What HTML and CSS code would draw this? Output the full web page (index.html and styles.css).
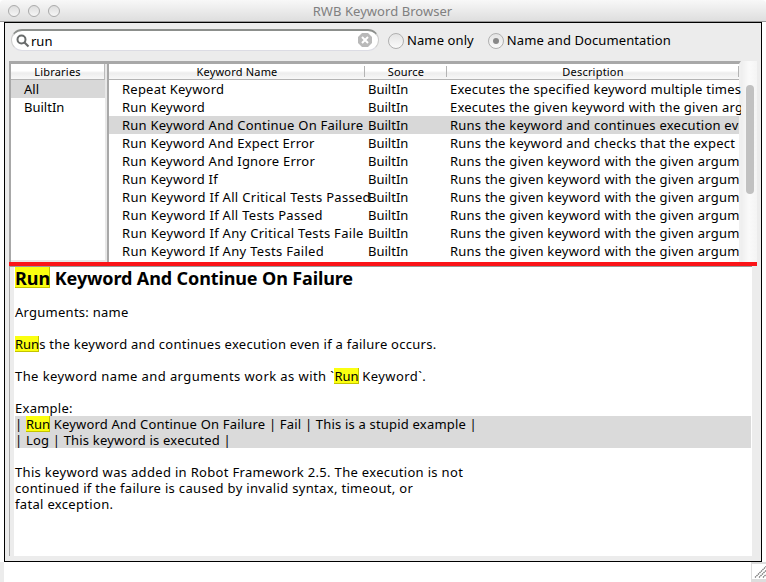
FILE: index.html
```html
<!DOCTYPE html>
<html lang="en">
<head>
<meta charset="utf-8">
<title>RWB Keyword Browser</title>
<link rel="stylesheet" href="styles.css">
</head>
<body>
<header class="titlebar">
  <div class="lights"><i></i><i></i><i></i></div>
  <h1><span>RWB Keyword Browser</span></h1>
</header>
<main class="frame">
  <div class="toolbar">
    <div class="search">
      <svg class="lens" width="14" height="14" viewBox="0 0 14 14"><circle cx="5.5" cy="5.5" r="4" fill="none" stroke="#686b6b" stroke-width="2"/><path d="M8.500 8.500l4 4" stroke="#686b6b" stroke-width="2.200"/></svg>
      <span class="query">run</span>
      <svg class="clear" width="14" height="14" viewBox="0 0 14 14"><path d="M4 0h6l4 4v6l-4 4H4l-4-4V4z" fill="#b9b9b9"/><path d="M4 4l6 6M10 4l-6 6" stroke="#fff" stroke-width="2"/></svg>
    </div>
    <div class="option"><i class="radio"></i><span>Name only</span></div>
    <div class="option second"><i class="radio on"></i><span>Name and Documentation</span></div>
  </div>
  <div class="lists">
    <section class="libraries">
      <div class="head"><span>Libraries</span></div>
      <div class="row selected">All</div>
      <div class="row">BuiltIn</div>
    </section>
    <section class="keywords">
      <div class="head cols"><span>Keyword Name</span><span>Source</span><span>Description</span></div>
      <div class="row cols"><span>Repeat Keyword</span><span>BuiltIn</span><span>Executes the specified keyword multiple times</span></div>
      <div class="row cols"><span>Run Keyword</span><span>BuiltIn</span><span>Executes the given keyword with the given arg</span></div>
      <div class="row cols selected"><span>Run Keyword And Continue On Failure</span><span>BuiltIn</span><span>Runs the keyword and continues execution ev</span></div>
      <div class="row cols"><span>Run Keyword And Expect Error</span><span>BuiltIn</span><span>Runs the keyword and checks that the expect</span></div>
      <div class="row cols"><span>Run Keyword And Ignore Error</span><span>BuiltIn</span><span>Runs the given keyword with the given argum</span></div>
      <div class="row cols"><span>Run Keyword If</span><span>BuiltIn</span><span>Runs the given keyword with the given argum</span></div>
      <div class="row cols wide"><span>Run Keyword If All Critical Tests Passed</span><span>BuiltIn</span><span>Runs the given keyword with the given argum</span></div>
      <div class="row cols wide"><span>Run Keyword If All Tests Passed</span><span>BuiltIn</span><span>Runs the given keyword with the given argum</span></div>
      <div class="row cols wide"><span>Run Keyword If Any Critical Tests Faile</span><span>BuiltIn</span><span>Runs the given keyword with the given argum</span></div>
      <div class="row cols wide"><span>Run Keyword If Any Tests Failed</span><span>BuiltIn</span><span>Runs the given keyword with the given argum</span></div>
    </section>
    <div class="scrollbar"><i></i></div>
  </div>
  <div class="splitter"></div>
  <article class="doc">
    <h2><mark>Run</mark> Keyword And Continue On Failure</h2>
    <p>Arguments: name</p>
    <p><mark>Run</mark>s the keyword and continues execution even if a failure occurs.</p>
    <p class="loose">The keyword name and arguments work as with `<mark>Run</mark> Keyword`.</p>
    <p class="label">Example:</p>
    <pre>| <mark>Run</mark> Keyword And Continue On Failure | Fail | This is a stupid example |
| Log | This keyword is executed |</pre>
    <p class="note">This keyword was added in Robot Framework 2.5. The execution is not<br>continued if the failure is caused by invalid syntax, timeout, or<br>fatal exception.</p>
  </article>
</main>
<footer class="bottom">
  <div class="grip"><svg width="14" height="15" viewBox="0 0 14 15"><path d="M3 13.500L14 2.500M7 13.500l7-7M11 13.500l3-3" stroke="#777" stroke-width="1.200" stroke-dasharray="1.500 .6" fill="none"/></svg></div>
</footer>
</body>
</html>
```
FILE: styles.css
```css
* { box-sizing: border-box; }
body { margin: 0; width: 766px; height: 582px; overflow: hidden; background: #fff; color: #000; font: 13px/16px "Noto Sans", sans-serif; }
h1, h2, p, pre { margin: 0; font: inherit; }
.titlebar { height: 22px; display: flex; align-items: center; background: linear-gradient(#f8f8f8, #dedede); border-bottom: 1px solid #999; border-radius: 4px 4px 0 0; }
.lights { display: flex; gap: 8px; padding-left: 8px; width: 64px; }
.lights i { width: 12px; height: 12px; border-radius: 50%; border: 1px solid #aaa; background: linear-gradient(#ddd, #f6f6f6); }
.titlebar h1 { flex: 1; text-align: center; padding-right: 65px; color: #808080; letter-spacing: .05px; }
.frame { margin-left: 4px; width: 758px; height: 540px; border: 1px solid #000; background: #ececec; padding: 0 4px; display: flex; flex-direction: column; }
.toolbar { height: 38px; display: flex; align-items: flex-start; padding: 6px 0 0 2px; }
.search { width: 368px; height: 22px; border-radius: 11px; background: #fff; border: 1px solid #ccc; border-top: 2px solid #8c8f8c; border-bottom-color: #dcdce4; display: flex; align-items: flex-start; padding: 3px 6px 0 4px; }
.search svg { flex: none; }
.clear { margin-top: -1px; }
.query { flex: 1; margin: -1px 0 0 1px; }
.option { display: flex; align-items: center; height: 22px; margin-left: 9px; margin-top: 1px; }
.option span { margin-top: -2px; letter-spacing: .1px; }
.radio { width: 16px; height: 16px; border-radius: 50%; border: 1px solid #b0b0b0; background: linear-gradient(#e4e4e4, #fafafa); margin-right: 3px; display: flex; align-items: center; justify-content: center; }
.radio.on::after { content: ""; width: 6px; height: 6px; border-radius: 50%; background: #888; }
.option.second { margin-left: 14px; }
.lists { height: 201px; display: flex; }
.libraries { width: 98px; border: 2px solid #a8a8a8; border-width: 3px 0 0 2px; background: #fff; box-shadow: inset -2px -2px #e8e8e8; padding-right: 2px; }
.keywords { width: 634px; border: 2px solid #a8a8a8; border-width: 3px 2px 0 2px; border-right-color: #f0f0f0; background: #fff; }
.head { height: 16px; font-size: 11px; line-height: 16px; border-bottom: 1px solid #b4b4b4; text-align: center; background: linear-gradient(#fff 0 45%, #ededed 60%, #f8f8f8); letter-spacing: .2px; }
.libraries .head { border-right: 1px solid #bbb; }
.row { height: 18px; line-height: 18px; white-space: pre; }
.libraries .row { padding-left: 13px; }
.selected { background: #d8d8d8; }
.cols { display: grid; grid-template-columns: 256px 82px 292px; }
.head.cols span { background: linear-gradient(#b4b4b4, #b4b4b4) right 2px / 1px 11px no-repeat; }
.row.cols { padding-left: 13px; grid-template-columns: 246px 82px 291px; letter-spacing: .23px; }
.row.wide span:first-child { letter-spacing: .3px; }
.row.cols span:nth-child(2) { letter-spacing: 0; }
.scrollbar { width: 16px; background: linear-gradient(90deg, #eee, #fafafa 50%, #f4f4f4); padding: 24px 0 0 5px; }
.scrollbar i { display: block; width: 8px; height: 109px; border-radius: 4px; background: #c1c1c1; }
.splitter { height: 4px; background: #fb1418; }
.doc { height: 290px; width: 743px; background: #fff; border-top: 1px solid #999; border-left: 1px solid #aaa; box-shadow: inset 4px 0 #ececec; padding: 0 1px 0 5px; letter-spacing: .26px; }
.doc h2 { height: 37px; font-size: 18px; line-height: 22px; font-weight: 700; white-space: nowrap; letter-spacing: -.12px; }
.doc p { margin-bottom: 16px; white-space: nowrap; }
.doc p.label { margin-bottom: 0; }
.doc p.loose { letter-spacing: .42px; }
.doc p.note { letter-spacing: .32px; }
.doc pre { background: #dadada; margin-bottom: 16px; letter-spacing: .19px; }
mark { color: #000; background: linear-gradient(#fbff10, #fbff10); display: inline-block; height: 16px; line-height: 16px; vertical-align: top; box-shadow: inset -1px -1px #c4c400; letter-spacing: 0; }
h2 mark { height: 21px; line-height: 22px; }
.bottom { height: 20px; display: flex; justify-content: flex-end; border-left: 4px solid #ececec; }
.grip { width: 15px; height: 20px; border: 1px solid #ddd; border-width: 2px 0 3px 1px; }
```
